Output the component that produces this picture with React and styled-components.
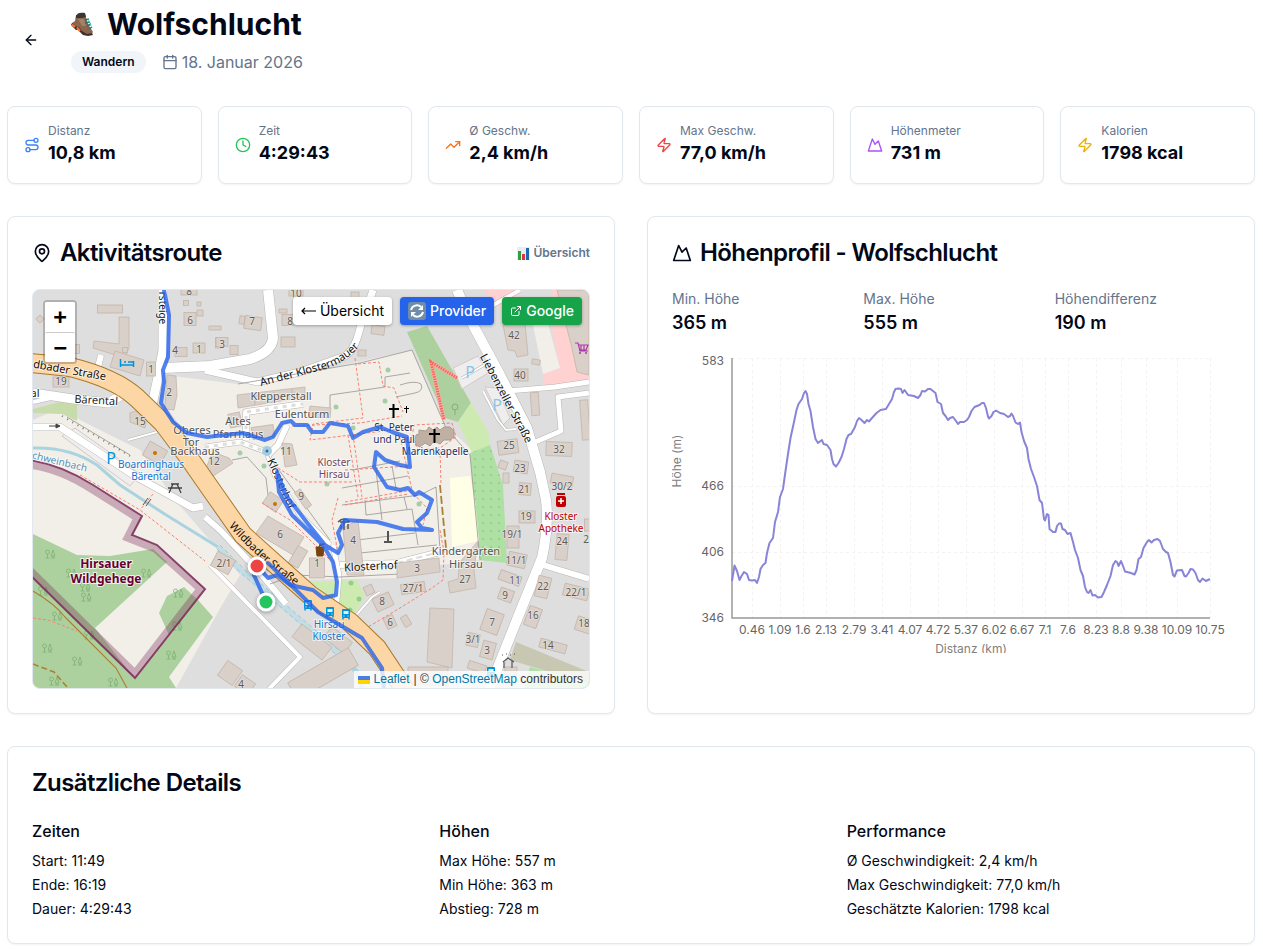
import React from 'react';
import styled, { createGlobalStyle } from 'styled-components';
import {
	ArrowLeft, Calendar, Clock, ExternalLink, MapPin, Mountain, Route, TrendingUp, Zap,
} from 'lucide-react';

const GlobalStyle = createGlobalStyle`
	*, *::before, *::after { box-sizing: border-box; }
	body {
		margin: 0;
		background: #fff;
		color: #020817;
		font-family: Inter, "Liberation Sans", sans-serif;
		font-size: 16px;
		line-height: 24px;
	}
	h1, h2, h3, p, ul, dl, dd { margin: 0; padding: 0; }
	button { font-family: inherit; cursor: pointer; }
`;

const Page = styled.main`
	display: flex;
	flex-direction: column;
	gap: 32px;
	padding: 6px 8px 5px 7px;
`;

const Header = styled.header`
	display: flex;
	align-items: center;
	gap: 16px;
`;

const BackButton = styled.button`
	display: flex;
	align-items: center;
	justify-content: center;
	width: 48px;
	height: 40px;
	border: 0;
	border-radius: 6px;
	background: transparent;
	color: #020817;

	&:hover { background: #f1f5f9; }
`;

const HeaderText = styled.div`
	display: flex;
	flex-direction: column;
	gap: 8px;
`;

const Title = styled.h1`
	display: flex;
	align-items: center;
	gap: 12px;
	font-size: 30px;
	font-weight: 700;
	line-height: 36px;
`;

const Meta = styled.div`
	display: flex;
	align-items: center;
	gap: 16px;
	color: #64748b;
`;

const Badge = styled.span`
	padding: 3px 11px;
	border-radius: 11px;
	background: #f1f5f9;
	color: #020817;
	font-size: 12px;
	font-weight: 600;
	line-height: 16px;
`;

const DateText = styled.span`
	display: flex;
	align-items: center;
	gap: 4px;
`;

const Card = styled.section`
	border: 1px solid #e2e8f0;
	border-radius: 8px;
	background: #fff;
	box-shadow: 0 1px 2px rgba(0, 0, 0, 0.05);
`;

const Stats = styled.div`
	display: grid;
	grid-template-columns: repeat(6, minmax(0, 1fr));
	gap: 16px;
`;

const StatCard = styled(Card)`
	display: flex;
	align-items: center;
	gap: 8px;
	padding: 16px;

	& > svg {
		flex: none;
		color: ${(p) => p.$tone};
	}
`;

const StatLabel = styled.p`
	color: #64748b;
	font-size: 12px;
	line-height: 16px;
`;

const StatValue = styled.p`
	font-size: 18px;
	font-weight: 700;
	line-height: 28px;
`;

const Panels = styled.div`
	display: grid;
	grid-template-columns: repeat(2, minmax(0, 1fr));
	gap: 32px;
`;

const Panel = styled(Card)`
	display: flex;
	flex-direction: column;
	gap: 24px;
	padding: 24px;
`;

const PanelHead = styled.div`
	display: flex;
	align-items: center;
	justify-content: space-between;
`;

const PanelTitle = styled.h2`
	display: flex;
	align-items: center;
	gap: 8px;
	font-size: 24px;
	font-weight: 600;
	line-height: 24px;
	letter-spacing: -0.025em;
`;

const ViewMode = styled.span`
	display: flex;
	align-items: center;
	gap: 4px;
	color: #64748b;
	font-size: 12px;
	font-weight: 600;
	line-height: 16px;
`;

const MapBox = styled.div`
	position: relative;
	height: 400px;
	border: 1px solid #e2e8f0;
	border-radius: 8px;
	overflow: hidden;
	background: #e0dfdf;

	& > svg {
		display: block;
		width: 100%;
		height: 100%;
	}
`;

const ZoomBar = styled.div`
	position: absolute;
	top: 10px;
	left: 10px;
	display: flex;
	flex-direction: column;
	border: 2px solid rgba(0, 0, 0, 0.2);
	border-radius: 4px;
	background: #fff;
	background-clip: padding-box;
`;

const ZoomButton = styled.button`
	width: 30px;
	height: 30px;
	padding: 0;
	border: 0;
	border-radius: 2px;
	background: #fff;
	color: #000;
	font: bold 22px/30px "DejaVu Sans Mono", monospace;

	& + & { border-top: 1px solid #ccc; }
`;

const MapTools = styled.div`
	position: absolute;
	top: 7px;
	right: 7px;
	display: flex;
	gap: 8px;
`;

const MapTool = styled.button`
	display: flex;
	align-items: center;
	gap: 4px;
	height: 28px;
	padding: 0 8px;
	border: 0;
	border-radius: 4px;
	background: ${(p) => p.$fill || '#fff'};
	color: ${(p) => (p.$fill ? '#fff' : '#000')};
	font-size: 14px;
	font-weight: ${(p) => (p.$fill ? 500 : 400)};
	line-height: 20px;
	box-shadow: 0 1px 3px rgba(0, 0, 0, 0.3);
`;

const Attribution = styled.div`
	position: absolute;
	right: 0;
	bottom: 0;
	display: flex;
	align-items: center;
	gap: 4px;
	padding: 0 6px 0 4px;
	background: rgba(255, 255, 255, 0.8);
	color: #333;
	font: 12px/17px "Liberation Sans", Arial, sans-serif;

	& a {
		color: #0078a8;
		text-decoration: none;
	}
`;

const Heights = styled.dl`
	display: grid;
	grid-template-columns: repeat(3, minmax(0, 1fr));
	gap: 16px;
`;

const HeightLabel = styled.dt`
	color: #64748b;
	font-size: 14px;
	line-height: 20px;
`;

const HeightValue = styled.dd`
	font-size: 18px;
	font-weight: 600;
	line-height: 28px;
`;

const ProfileBody = styled.div`
	display: flex;
	flex-direction: column;
	gap: 16px;
`;

const Chart = styled.svg`
	display: block;
	width: 100%;
	height: 300px;

	& text {
		font: 12px Inter, "Liberation Sans", sans-serif;
		fill: #666;
	}
	& .title { fill: #808080; }
`;

const Details = styled.div`
	display: grid;
	grid-template-columns: repeat(3, minmax(0, 1fr));
	gap: 24px;
`;

const DetailTitle = styled.h3`
	margin-bottom: 8px;
	font-size: 16px;
	font-weight: 500;
	line-height: 24px;
`;

const DetailList = styled.ul`
	display: flex;
	flex-direction: column;
	gap: 4px;
	list-style: none;
	font-size: 14px;
	line-height: 20px;
`;

const stats = [
	{ label: 'Distanz', value: '10,8 km', icon: Route, tone: '#3b82f6' },
	{ label: 'Zeit', value: '4:29:43', icon: Clock, tone: '#22c55e' },
	{ label: 'Ø Geschw.', value: '2,4 km/h', icon: TrendingUp, tone: '#f97316' },
	{ label: 'Max Geschw.', value: '77,0 km/h', icon: Zap, tone: '#ef4444' },
	{ label: 'Höhenmeter', value: '731 m', icon: Mountain, tone: '#a855f7' },
	{ label: 'Kalorien', value: '1798 kcal', icon: Zap, tone: '#eab308' },
];

const heights = [
	['Min. Höhe', '365 m'],
	['Max. Höhe', '555 m'],
	['Höhendifferenz', '190 m'],
];

const details = [
	{ title: 'Zeiten', lines: ['Start: 11:49', 'Ende: 16:19', 'Dauer: 4:29:43'] },
	{ title: 'Höhen', lines: ['Max Höhe: 557 m', 'Min Höhe: 363 m', 'Abstieg: 728 m'] },
	{
		title: 'Performance',
		lines: ['Ø Geschwindigkeit: 2,4 km/h', 'Max Geschwindigkeit: 77,0 km/h', 'Geschätzte Kalorien: 1798 kcal'],
	},
];

/* ---------- map data ---------- */

const areas = [
	['#f2efe9', '172,376 238,384 330,368 412,350 425,380 445,425 472,450 480,560 440,565 400,578 290,580 230,510 190,440 165,405'],
	['#f2efe9', '33,420 60,408 80,420 140,450 175,500 240,575 222,605 176,688 33,688'],
	['#add19e', '33,534 77,555 110,556 153,549 167,562 95,628 33,577'],
	['#add19e', '33,575 95,628 135,679 198,600 213,617 169,677 176,688 33,688'],
	['#add19e', '184,587 167,596 159,613 169,635 199,601'],
	['#c8dcab', '33,409 60,402 77,402 77,421 62,414 33,413'],
	['#add19e', '407,332 427,326 471,403 458,422 445,418'],
	['#cdebb0', '471,403 488,431 490,446 472,453 458,422'],
	['#aedfa3', '470,453 490,445 503,485 507,563 480,560'],
	['#ffffe5', '450,478 470,476 475,500 479,541 452,547'],
	['#cdebb0', '300,583 357,580 365,597 350,620 330,612'],
	['#ffd1d1', '484,290 589,290 589,384 543,386 543,372 560,368 548,312 500,309'],
	['#f2efe9', '533,325 547,320 560,368 543,374'],
	['#dedede', '515,290 552,290 556,312 545,318 528,309'],
	['#c8c7b1', '516,642 589,672 589,684 510,660'],
	['#aedfa3', '530,667 589,684 589,688 524,688'],
];

const blocks = [
	'119,317 129,317 129,348 125,358 93,348 94,341 119,344',
	'115,351 144,360 140,376 110,367',
	'167,375 176,376 177,395 174,410 165,409',
	'130,413 135,411 147,417 145,428 130,422',
	'237,395 305,387 305,397 238,408',
	'310,406 331,408 330,418 308,417',
	'282,443 292,444 297,465 285,467',
	'503,325 525,323 528,355 517,357 515,351 508,350',
	'557,290 589,290 589,375 577,372 572,348',
	'268,516 304,537 293,555 256,533',
	'343,528 358,520 364,575 347,575',
	'397,563 439,558 440,572 397,578',
	'448,582 458,579 460,562 478,541 474,570 476,588 450,593',
	'430,608 454,609 452,668 427,662',
	'205,470 213,452 229,458 233,463 210,478',
];

// x, y, width, height, angle
const houses = [
	[40, 319, 6, 6, 45], [110, 309, 25, 8], [151, 369, 9, 14], [61, 382, 16, 10], [155, 453, 20, 16, 30],
	[189, 291, 16, 8], [190, 319, 12, 13], [200, 313, 6, 6], [181, 352, 12, 9], [199, 348, 12, 10],
	[186, 303, 5, 5], [199, 304, 4, 4], [215, 328, 12, 4], [218, 343, 5, 10], [253, 323, 17, 13, 8],
	[242, 320, 5, 8, 8], [288, 320, 12, 11], [283, 311, 8, 4], [288, 342, 14, 10], [222, 342, 12, 9],
	[234, 350, 8, 9], [296, 292, 14, 8], [355, 295, 8, 6], [378, 330, 13, 9, 8], [362, 353, 8, 6],
	[235, 420, 12, 14, -12], [263, 432, 22, 12, -8], [521, 375, 14, 12], [536, 362, 8, 5, 10],
	[535, 404, 8, 23, -4], [508, 447, 20, 14, -8], [559, 449, 26, 14, 2], [521, 467, 14, 12, 8],
	[562, 480, 22, 10, 10], [585, 420, 8, 40, -4], [503, 465, 8, 8, 20], [506, 478, 6, 10],
	[298, 557, 11, 20, 30], [303, 499, 7, 20, -35], [273, 502, 16, 14, 35], [223, 563, 20, 16, 28],
	[317, 568, 15, 20], [383, 602, 18, 14, -25], [369, 590, 9, 9, -25], [390, 622, 10, 12, -25],
	[312, 642, 38, 16, 38], [338, 640, 26, 14, 38], [323, 674, 70, 20, -30], [230, 673, 18, 18, 35],
	[245, 685, 16, 14, 35], [413, 588, 24, 10, -8], [428, 676, 40, 18], [406, 621, 7, 11, -30],
	[510, 578, 22, 10, 20], [517, 560, 18, 14, 12], [513, 537, 12, 22], [527, 517, 16, 12],
	[525, 489, 12, 12, 5], [562, 547, 12, 26, 5], [543, 587, 13, 21, 14], [576, 592, 25, 12, 14],
	[506, 595, 14, 12, 20], [492, 622, 18, 22, 20], [473, 640, 12, 13, 12], [488, 650, 13, 17, 15],
	[533, 617, 13, 20, 20], [553, 646, 27, 9, 15], [584, 625, 16, 14, 18], [477, 667, 18, 8, 18],
	[125, 350, 5, 5], [77, 349, 5, 9], [587, 525, 5, 12], [511, 671, 12, 8],
];

const roads = [
	['M163,290 L163,325 L163,350 L157,382 L152,405', 9],
	['M163,368 L210,366 L250,359 Q272,352 273,338 L268,290', 10],
	['M205,370 L257,382 L300,372 L345,356 Q355,350 360,328 L373,290', 7],
	['M457,290 L473,325 L500,375 L527,428 L540,472 L546,500 Q549,525 542,558 L520,612 L488,692', 10],
	['M508,391 L555,387 L589,382', 5],
	['M533,443 L561,431 L558,397 L589,393', 5],
	['M543,565 L589,579', 6],
	['M488,308 L520,290', 4],
	['M33,393 L73,399 L108,403 L122,395', 9],
	['M33,402 L60,396', 4],
	['M33,427 L60,427 L135,476 L193,508 L203,506', 7],
	['M101,355 L98,367', 6],
	['M128,440 L157,432', 2],
	['M210,565 L300,657 L266,692', 4],
	['M340,565 L397,563 L440,552', 6],
	['M333,545 L339,575 L336,612', 5],
	['M352,620 L372,597 L380,592', 2],
	['M246,440 L246,412 L303,404', 6],
	['M287,425 L278,445 L268,455', 6],
	['M205,447 L240,442 L267,452 L275,475 L300,515 L330,545', 5],
	['M462,378 L486,364', 2],
	['M483,391 L498,420 L506,430 L516,429', 2],
	['M205,517 L220,530 L262,575 L286,604', 6],
];

const footpaths = [
	'M355,358 L363,418 L313,424 L310,440 L408,428',
	'M358,364 L379,362 L383,386 L394,388 L403,412',
	'M292,426 L360,423 L402,416',
	'M348,435 L358,497 M353,435 L362,497',
	'M345,502 L412,490 M345,505 L408,494 M400,437 L412,490',
	'M278,468 L300,482 L352,482 M345,470 L410,466',
	'M262,503 L290,520 L330,560',
	'M338,498 L332,520 L338,553',
	'M440,450 L441,485 M440,530 L444,552 L443,580 L432,588 L400,608 L368,627',
	'M410,490 L427,508 L423,525',
	'M80,475 L140,510 L205,561 M153,494 L140,510',
	'M33,618 L48,620 L77,631',
	'M412,437 L414,425 L452,423 L456,437 L440,448 L418,450 Z',
];

const walls = [
	'M238,384 L360,363 L412,350 L446,428',
	'M330,408 L330,395 L385,387 L385,377 L410,373',
	'M400,385 Q415,380 421,384 Q424,391 415,393 L396,397',
	'M232,460 L247,457 L266,478 L268,495 M268,455 L330,540',
	'M352,470 L400,461 M342,488 L408,476 M342,505 L420,495 L436,487 L440,550',
	'M365,500 L366,515 L412,509 L418,545 M357,540 L415,533 M360,553 L437,545',
	'M376,470 L382,520 M392,466 L396,488 M404,497 L407,509',
	'M446,428 L470,455 L480,560',
	'M270,584 L295,575 L340,577 L400,574',
	'M67,417 L130,455',
];

const numbers = [
	['8', 189, 295], ['6', 190, 324], ['1', 199, 353], ['4', 175, 354], ['1', 151, 373], ['2', 169, 396],
	['19', 61, 385], ['15', 140, 425], ['12', 214, 465], ['7', 252, 325], ['8', 290, 325], ['3', 222, 348],
	['10', 296, 297], ['42', 514, 339], ['40', 520, 379], ['25', 509, 449], ['32', 559, 453], ['23', 520, 472],
	['30/2', 562, 490], ['11', 286, 455], ['21', 524, 493], ['19', 526, 520], ['19/1', 512, 538],
	['24', 562, 545], ['2', 586, 543], ['11/1', 516, 564], ['11', 515, 584], ['9', 505, 599],
	['22', 543, 590], ['22/1', 576, 596], ['16', 533, 619], ['14', 548, 649], ['18', 584, 627],
	['7', 492, 626], ['3/1', 473, 643], ['3', 487, 654], ['27', 465, 583], ['27/1', 413, 592],
	['3', 417, 572], ['9', 301, 500], ['6', 280, 538], ['4', 353, 544], ['1', 317, 567],
	['2/1', 224, 567], ['8', 382, 605], ['6', 390, 626], ['4', 241, 688],
];

// text, x, y, colour, size, angle
const names = [
	['Klepperstall', 281, 400, '#555', 11], ['Eulenturm', 302, 418, '#555', 11],
	['Altes', 238, 425, '#555', 11], ['Pfarrhaus', 238, 438, '#555', 11],
	['Oberes', 192, 434, '#555', 11], ['Tor', 191, 446, '#555', 11], ['Backhaus', 195, 455, '#555', 11],
	['Kloster', 334, 466, '#734a5c', 10], ['Hirsau', 334, 478, '#734a5c', 10],
	['St. Peter', 394, 431, '#222f60', 10], ['und Paul', 394, 443, '#222f60', 10],
	['Marienkapelle', 435, 455, '#222f60', 10],
	['Boardinghaus', 151, 468, '#1477d4', 10], ['Bärental', 151, 480, '#1477d4', 10],
	['Hirsau', 329, 628, '#1477d4', 10], ['Kloster', 329, 640, '#1477d4', 10],
	['Kindergarten', 466, 555, '#555', 11], ['Hirsau', 466, 568, '#555', 11],
	['Kloster', 561, 520, '#bf0000', 10], ['Apotheke', 561, 532, '#bf0000', 10],
	['Bärental', 96, 404, '#222', 11, 3], ['al', 35, 397, '#222', 11],
	['chweinbach', 59, 465, '#5792b8', 10, 14],
	['Liebenzeller Straße', 503, 400, '#111', 11, 62],
	['Klosterhof', 278, 485, '#111', 11, 66],
	['Klosterhof', 371, 570, '#111', 11, -3],
	['dbader Straße', 69, 374, '#111', 11, 10],
	['rsteige', 159, 308, '#111', 10, 90],
];

// names that follow a bend of their street
const curvedNames = [
	['wall-street', 'M261,386 Q300,376 325,369 Q350,361 366,338', 'An der Klostermauer'],
	['main-street', 'M229,526 Q255,558 304,591', 'Wildbader Straße'],
];

const trees = [
	[50, 554], [71, 573], [85, 587], [146, 573], [43, 591], [86, 597], [57, 616], [89, 635], [47, 648],
	[77, 661], [54, 681], [113, 682], [171, 655], [177, 626], [178, 593],
];

const track = 'M164,290 L169,315 L168,357 L163,370 L164,382 L161,403 L173,422 L187,433 L207,437 L243,433 L265,440 L273,437 L282,423 L291,421 L295,425 L307,425 L312,432 L323,432 L330,423 L348,426 L353,438 L363,432 L380,427 L392,432 L407,437 L410,467 L400,465 L385,460 L376,452 L374,467 L387,487 L400,490 L408,488 L415,495 L419,492 L432,500 L427,513 L417,522 L422,528 L432,530 L403,529 L377,522 L345,520 L338,533 L342,545 L338,553 L325,545 L305,520 L285,494 L277,472 L279,492 L292,515 L323,545 L333,562 L337,582 L336,595 L323,598 L313,590 L290,585 L277,575 L268,578 L258,567 L254,575 L262,593 L266,602';
const trackSouth = 'M268,563 L298,592 L318,612 L362,638 L382,668 L384,690';
const highway = 'M30,363 L70,367 Q115,378 137,398 L163,423 L187,455 L217,498 L243,535 L273,562 L310,595 L350,622 L377,648 L405,690';
const stream = 'M33,448 Q70,447 97,465 L120,485 L163,513 L218,547';
const reserve = 'M28,460 Q60,464 93,485 L142,516 L132,535 L157,545 L205,589 L135,678 L28,573';
const reserveBand = 'M28,465 Q58,468 91,489 L137,518 L127,538 L155,549 L200,589 L135,673 L28,568';

/* ---------- elevation data ---------- */

const profile = '732,581 734.5,565.5 737,571 739.5,580 741.5,576 744,572 747,574 749,580 752,580.5 755,580 757,583 759,577 760.5,569 763,565 765.5,563 767,553 769.5,543 773,538 775,522 778,512 780,497 783,489 785.5,471 788,454 790.5,438 794,422 796.5,410 798.5,404 802,399 804,393 805.5,391 807,394 808.5,404 810.5,411 813,427 815.5,439 818,443 820.5,441 822,440 823.5,444 827,445 830.5,450 832,459 833.5,464 836,466.5 838.5,463 841.5,457 844,449 846.5,439 848.5,435 851,434 855,427 857,421 859,418 861.5,420 864.5,423 867,420 869,421.5 872,418 876.5,413 880.5,410 886,409 889,404 892,399 894,392 895.5,389 898.5,388.5 901,389 902.5,393 904.5,390 906,392 908,395 914,396 918,398 920.5,395 922,391 925,391.5 928,389 930.5,389 933,391 935.5,393 937.5,402 941,404 943,413 945.5,416 948,420 950,418 953,417 956,421 958,424 960,422 964,422 967,420 969,417 971.5,411 974.5,407 979.5,405 982,403 984,403 986,408 988,416.5 989,418.5 991.5,416 993.5,412 996,410.5 1000,413 1004,414 1008,417 1010,416 1011.5,413.5 1013,416 1015.5,422.5 1018,424 1020,422.5 1021.5,432 1024,441 1027,448 1028.5,459 1031,469 1034,477 1037,486 1039.5,500 1042,503 1044,519 1045,520.5 1047,514 1048.5,515 1049.5,529 1053,532 1055.5,532 1057,526 1059,523.5 1061,523.5 1062.5,529 1065,530 1067.5,534 1070.5,533 1073,542 1075,550 1078,558 1080.5,570 1083,576 1085,587 1087,592 1088.5,593 1090.5,590 1092.5,595.5 1095,595 1098,597.5 1101.5,597 1104,592 1107,585 1110.5,576 1113,565 1115.5,561 1117,562 1118.5,566 1121,561 1123,566 1125,571.5 1131,573 1134.5,574.5 1136.5,570 1138.5,559 1141,557 1143.5,548 1147,542 1149,540 1151.5,542.5 1154,540 1157.5,539 1160,541 1163,549 1166,552 1168,553 1170.5,562 1173,575 1174.5,576.5 1177,570.5 1182,570 1184.5,576 1186,576.5 1188.5,573 1190.5,569 1193,569.5 1195.5,573 1198,580 1200,582 1202.5,578.5 1206,581 1210,579';

const xTicks = [
	[752, '0.46'], [780, '1.09'], [803, '1.6'], [826, '2.13'], [854, '2.79'], [882, '3.41'],
	[910, '4.07'], [938, '4.72'], [966, '5.37'], [994, '6.02'], [1022, '6.67'], [1045, '7.1'],
	[1068, '7.6'], [1096, '8.23'], [1121, '8.8'], [1146, '9.38'], [1177, '10.09'], [1210, '10.75'],
];

const yTicks = [[358, '583', 365], [486, '466', 490], [552, '406', 556], [618, '346', 622]];

const Boot = () => (
	<svg width="24" height="24" viewBox="0 0 24 24" aria-hidden="true">
		<path d="M5 3 4 9 1 11 1 12 7 15 10 19 16 23 20 23 22 20 17 12 14 2Z" fill="#8a6650" />
		<path d="M5 4C6 1 9 0 14 1L15 5 11 6 5 6Z" fill="#3c3633" />
		<path d="M7 7 13 7 15 14 11 14Z" fill="#a78065" />
		<path d="M1 11 5 14 8 15 11 19 16 22 21 21 22 23 17 24 12 23 7 18 5 18 0 13Z" fill="#3f302b" />
		<path d="M1 12.500 4 15M6 15.500 9 19" stroke="#ff7430" strokeWidth="2" />
		<path d="M14 8 18 7M14 11 19 10M16 14 20 12M18 17 21 15" stroke="#23706d" strokeWidth="1.500" />
		<path d="M17 7 19 11 20 14" stroke="#3fc4b4" strokeWidth="1" fill="none" />
	</svg>
);

const BarsIcon = () => (
	<svg width="13" height="13" viewBox="0 0 13 13" aria-hidden="true">
		<path d="M0 0h13v13H0z" fill="#e8edf0" />
		<path d="M1 4h3v9H1z" fill="#2f9e44" />
		<path d="M5 7h3v6H5z" fill="#d9363e" />
		<path d="M9 1h3v12H9z" fill="#1e68b8" />
	</svg>
);

const ReloadIcon = () => (
	<svg width="18" height="18" viewBox="0 0 18 18" fill="none" aria-hidden="true">
		<rect width="18" height="18" rx="3" fill="#6d8da9" />
		<path d="M3 8a6 6 0 0 1 10-3M15 10a6 6 0 0 1-10 3" stroke="#fff" strokeWidth="2" />
		<path d="m15 3v5h-5zM3 15v-5h5z" fill="#fff" />
	</svg>
);

const LongArrow = () => (
	<svg width="15" height="10" viewBox="0 0 15 10" fill="none" stroke="#000" strokeWidth="1.200" aria-hidden="true">
		<path d="M1 5h14M4 2 1 5l3 3" />
	</svg>
);

const RouteMap = () => (
	<svg viewBox="33 290 556 398" preserveAspectRatio="xMidYMid slice" role="img" aria-label="Karte der Aktivitätsroute" fontFamily='"Noto Sans", sans-serif' fill="none">
		<defs>
			<pattern id="dots" width="8" height="8" patternUnits="userSpaceOnUse">
				<circle cx="3" cy="3" r="0.6" fill="#4f9350" />
			</pattern>
			<g id="tree" stroke="#7fb075" strokeWidth="0.8">
				<circle cx="-2.500" cy="-2" r="2" />
				<path d="M-2.500 0v4M-4.500 4h4M3 -4 1 2h4zM3 2v2M1 4h4" />
			</g>
			<g id="bus">
				<rect x="-4" y="-5" width="8" height="9" rx="1" fill="#0092da" />
				<path d="M-2.500 -3h5v3h-5z" fill="#dff1fa" />
				<path d="M-2.500 2h1M1.500 2h1" stroke="#fff" />
				<path d="M-3 4v1.500M3 4v1.500" stroke="#0092da" strokeWidth="1.500" />
			</g>
			{curvedNames.map(([id, d]) => <path key={id} id={id} d={d} />)}
		</defs>
		<path d="M33 290h556v398H33z" fill="#dedede" />
		{areas.map(([fill, points], i) => <polygon key={i} points={points} fill={fill} />)}
		<polygon points="470,453 490,445 503,485 507,563 480,560" fill="url(#dots)" />
		<path d={stream} stroke="#aad3df" strokeWidth="3" />
		<path d="M218,547 L243,572 L340,655" stroke="#c3dde4" strokeWidth="5" />
		<path d="M217,549 L242,574 L339,657 M220,545 L245,570 L341,652" stroke="#8fc0d0" strokeWidth="0.8" strokeDasharray="4 3" />
		<path d="M340,655 L357,672 L362,688" stroke="#aad3df" strokeWidth="5" />
		<g fill="#eeeeee" stroke="#d6c8c8">
			<path d="M453,368 478,356 488,373 462,389Z" />
			<path d="M485,387 497,388 510,418 503,425Z" />
			<path d="M62,436 75,428 140,474 130,486Z" />
		</g>
		{trees.map(([x, y]) => <use key={`${x}-${y}`} href="#tree" x={x} y={y} />)}
		<path d="M33,591 Q55,604 65,617 L116,668 L128,690" stroke="#ab8233" strokeWidth="1.200" />
		<path d="M33,664 L54,672 L68,688" stroke="#ab8233" strokeWidth="1.600" strokeDasharray="6 3" />
		<g stroke="#b9b5b1" strokeLinejoin="round">
			{roads.map(([d, w]) => <path key={d} d={d} strokeWidth={w + 1} />)}
		</g>
		<g stroke="#fff" strokeLinejoin="round">
			{roads.map(([d, w]) => <path key={d} d={d} strokeWidth={w} />)}
		</g>
		<path d="M246,438 L246,412 L303,404 M205,447 L240,442 L267,452" stroke="#ddd" strokeWidth="3" strokeDasharray="4 5" />
		<path d="M397,563 L440,552" stroke="#ddd" strokeWidth="2" strokeDasharray="6 4" />
		<g stroke="#8b8784" strokeWidth="0.7">
			{walls.map((d) => <path key={d} d={d} />)}
		</g>
		<g fill="#d9d0c9" stroke="#c4b5a9" strokeWidth="0.8">
			{blocks.map((points) => <polygon key={points} points={points} />)}
			{houses.map(([x, y, w, h, a = 0]) => (
				<rect key={`${x}-${y}`} x={x - w / 2} y={y - h / 2} width={w} height={h} transform={`rotate(${a} ${x} ${y})`} />
			))}
		</g>
		<path d="M255,395 V405 M274,392 V402 M292,389 V399" stroke="#c4b5a9" />
		<path d="M415,440 416,435 419,434 419,430 426,431 429,427 433,430 437,427 440,430 444,427 450,427 454,431 454,437 450,440 444,440 440,444 434,441 430,446 425,443 420,447 416,445Z" fill="#c0b0a4" stroke="#aa998d" />
		<path d="M62,416 L130,456" stroke="#777" strokeWidth="2" strokeDasharray="1 5" />
		<g stroke="#fa8072" strokeWidth="1" strokeDasharray="3 2">
			{footpaths.map((d) => <path key={d} d={d} />)}
		</g>
		<path d="M431,362 L457,378 M431,362 L444,420" stroke="#f6b3aa" strokeWidth="4" />
		<path d="M457,378 L431,362 L444,420" stroke="#f2695c" strokeWidth="3" strokeDasharray="1.500 1" />
		<path d="M440,485 L446,548" stroke="#ab8233" strokeWidth="1.800" strokeDasharray="8 3" />
		<path d={highway} stroke="#a9792a" strokeWidth="20" />
		<path d={highway} stroke="#fcd6a4" strokeWidth="18" />
		<path d={reserveBand} stroke="#7a2e58" strokeOpacity="0.35" strokeWidth="7" />
		<path d={reserve} stroke="#7d2f5b" strokeOpacity="0.9" strokeWidth="2" />
		<path d="M49,426h10M56,424l4,2-4,2z" stroke="#444" strokeWidth="1" fill="#444" />
		<g fill="#74b87a" opacity="0.6">
			{[[388, 370], [385, 401], [336, 407], [240, 453], [264, 466], [419, 504], [353, 428], [327, 484], [351, 583], [350, 610], [359, 599], [378, 425]].map(([x, y]) => (
				<circle key={`${x}-${y}`} cx={x} cy={y} r="2.500" />
			))}
		</g>
		<circle cx="455" cy="407" r="3" stroke="#84ad7a" />
		<path d="M455 410v5" stroke="#84ad7a" />
		<circle cx="267" cy="451" r="5" fill="#a4cddd" />
		<circle cx="267" cy="451" r="1.500" fill="#3169c1" />
		<path d="M393.500,404v14M389,409h10" stroke="#000" strokeWidth="2" />
		<path d="M406.500,406v7M404,408.500h5" stroke="#000" />
		<path d="M434.500,429v14M429,434h11" stroke="#000" strokeWidth="2" />
		<path d="M120.500,359v8M120.500,365h13M133.500,361v6M124,362h2M128,362h5" stroke="#0092da" strokeWidth="1.500" />
		<circle cx="155" cy="453" r="2" fill="#c77400" />
		<circle cx="275" cy="504" r="2" fill="#c77400" />
		<path d="M171,484h8M168,488h14M173,484l-4,9M177,484l4,9" stroke="#444" strokeWidth="1.300" />
		<path d="M143,505 148,498M146,506 151,499" stroke="#555" />
		<path d="M316,547h8l-1,9h-6zM319,547l1,-3h5" fill="#78430c" stroke="#78430c" />
		<path d="M338,522q6,-6 12,0M340,522h9M344,520v10M341,525v4M348,524v5" stroke="#555" strokeWidth="1.500" />
		<path d="M388,531v10M384,542h8" stroke="#555" strokeWidth="2" />
		<path d="M575,343h3l2,8h8M578,345h10l-2,5h-7M581,345v5M584,345v5" stroke="#ac39ac" strokeWidth="1.200" />
		<circle cx="580" cy="353" r="1" fill="#ac39ac" />
		<circle cx="586" cy="353" r="1" fill="#ac39ac" />
		<rect x="556" y="496" width="10" height="11" rx="2" fill="#bf0000" />
		<path d="M557,494h8" stroke="#bf0000" strokeWidth="2" />
		<path d="M561,498v6M558,501h6" stroke="#fff" strokeWidth="1.500" />
		<path d="M503,662l5,-4 6,4M504,661v7M512,661v7M502,655h1M506,654h1M510,655h1M514,654h1" stroke="#555" strokeWidth="1.200" />
		<use href="#bus" x="308" y="605" />
		<use href="#bus" x="330" y="612" />
		<use href="#bus" x="346" y="614" />
		<use href="#bus" x="491" y="672" />
		<g textAnchor="middle" fontSize="10" fill="#5f5b57" stroke="#e4dfda" strokeWidth="1.500" paintOrder="stroke">
			{numbers.map(([t, x, y]) => <text key={`${x}-${y}`} x={x} y={y}>{t}</text>)}
		</g>
		<g textAnchor="middle" stroke="#fff" strokeOpacity="0.6" strokeWidth="2" paintOrder="stroke">
			{names.map(([t, x, y, fill, size, a = 0]) => (
				<text key={`${x}-${y}`} x={x} y={y} fill={fill} fontSize={size} transform={`rotate(${a} ${x} ${y})`}>{t}</text>
			))}
			<g fill="#660033" fontSize="12" fontWeight="700" strokeOpacity="0.8">
				<text x="106" y="568">Hirsauer</text>
				<text x="106" y="583">Wildgehege</text>
			</g>
			<g fontSize="16" strokeWidth="0">
				<text x="111" y="464" fill="#0092da">P</text>
				<text x="470" y="378" fill="#8cc5e4">P</text>
				<text x="497" y="411" fill="#8cc5e4">P</text>
			</g>
		</g>
		<g fill="#111" fontSize="11">
			{curvedNames.map(([id, , t]) => (
				<text key={id}><textPath href={`#${id}`}>{t}</textPath></text>
			))}
		</g>
		<g stroke="#2563eb" strokeOpacity="0.8" strokeWidth="4" strokeLinecap="round" strokeLinejoin="round">
			<path d={track} />
			<path d={trackSouth} />
		</g>
		<g filter="drop-shadow(0 1px 2px rgba(0,0,0,0.35))" stroke="#fff" strokeWidth="3">
			<circle cx="257" cy="566" r="8" fill="#ef4444" />
			<circle cx="266" cy="602" r="8" fill="#22c55e" />
		</g>
	</svg>
);

const ElevationChart = () => (
	<Chart viewBox="672 353 558 300" preserveAspectRatio="xMinYMin meet" role="img" aria-label="Höhenprofil">
		<g stroke="#f2f2f2" strokeDasharray="3 3">
			{yTicks.map(([y]) => <path key={y} d={`M732 ${y}.500H1210`} />)}
			{xTicks.map(([x]) => <path key={x} d={`M${x}.500 358V618`} />)}
		</g>
		<path d="M732 358V618H1210" fill="none" stroke="#999" strokeWidth="1.500" />
		<polyline points={profile} fill="none" stroke="#8884d8" strokeWidth="2" strokeLinejoin="round" />
		<g textAnchor="end">
			{yTicks.map(([y, t, base]) => <text key={t} x="724" y={base}>{t}</text>)}
		</g>
		<g textAnchor="middle">
			{xTicks.map(([x, t]) => <text key={t} x={x} y="634">{t}</text>)}
			<text className="title" x="971" y="653">Distanz (km)</text>
			<text className="title" x="681" y="461" transform="rotate(-90 681 461)">Höhe (m)</text>
		</g>
	</Chart>
);

function App() {
	return (
		<>
			<GlobalStyle />
			<Page>
				<Header>
					<BackButton type="button" aria-label="Zurück">
						<ArrowLeft size={16} />
					</BackButton>
					<HeaderText>
						<Title><Boot />Wolfschlucht</Title>
						<Meta>
							<Badge>Wandern</Badge>
							<DateText><Calendar size={16} />18. Januar 2026</DateText>
						</Meta>
					</HeaderText>
				</Header>

				<Stats>
					{stats.map(({ label, value, icon: Icon, tone }) => (
						<StatCard key={label} $tone={tone}>
							<Icon size={16} />
							<div>
								<StatLabel>{label}</StatLabel>
								<StatValue>{value}</StatValue>
							</div>
						</StatCard>
					))}
				</Stats>

				<Panels>
					<Panel>
						<PanelHead>
							<PanelTitle><MapPin size={20} />Aktivitätsroute</PanelTitle>
							<ViewMode><BarsIcon />Übersicht</ViewMode>
						</PanelHead>
						<MapBox>
							<RouteMap />
							<ZoomBar>
								<ZoomButton type="button" aria-label="Vergrößern">+</ZoomButton>
								<ZoomButton type="button" aria-label="Verkleinern">−</ZoomButton>
							</ZoomBar>
							<MapTools>
								<MapTool type="button"><LongArrow />Übersicht</MapTool>
								<MapTool type="button" $fill="#2563eb"><ReloadIcon />Provider</MapTool>
								<MapTool type="button" $fill="#16a34a"><ExternalLink size={12} />Google</MapTool>
							</MapTools>
							<Attribution>
								<svg width="12" height="8" viewBox="0 0 12 8" aria-hidden="true">
									<path fill="#4c7be1" d="M0 0h12v4H0z" />
									<path fill="#ffd500" d="M0 4h12v4H0z" />
								</svg>
								<a href="#leaflet">Leaflet</a>
								<span>| © <a href="#osm">OpenStreetMap</a> contributors</span>
							</Attribution>
						</MapBox>
					</Panel>

					<Panel>
						<PanelTitle><Mountain size={20} />Höhenprofil - Wolfschlucht</PanelTitle>
						<ProfileBody>
							<Heights>
								{heights.map(([label, value]) => (
									<div key={label}>
										<HeightLabel>{label}</HeightLabel>
										<HeightValue>{value}</HeightValue>
									</div>
								))}
							</Heights>
							<ElevationChart />
						</ProfileBody>
					</Panel>
				</Panels>

				<Panel>
					<PanelTitle>Zusätzliche Details</PanelTitle>
					<Details>
						{details.map(({ title, lines }) => (
							<div key={title}>
								<DetailTitle>{title}</DetailTitle>
								<DetailList>
									{lines.map((line) => <li key={line}>{line}</li>)}
								</DetailList>
							</div>
						))}
					</Details>
				</Panel>
			</Page>
		</>
	);
}

export default App;
